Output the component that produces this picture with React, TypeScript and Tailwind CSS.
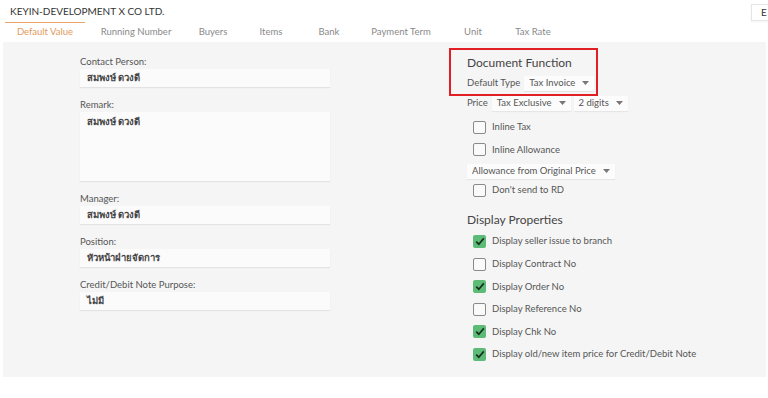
import React from "react";

const tabs: [string, string][] = [
  ["Default Value", "w-[80px]"],
  ["Running Number", "w-[102px]"],
  ["Buyers", "w-[52px]"],
  ["Items", "w-[64px]"],
  ["Bank", "w-[52px]"],
  ["Payment Term", "w-[92px]"],
  ["Unit", "w-[52px]"],
  ["Tax Rate", "w-[68px]"],
];

function Caret() {
  return (
    <svg width="7" height="4" viewBox="0 0 7 4" className="ml-[7px] shrink-0">
      <path d="M0 0h7L3.5 4z" fill="#777" />
    </svg>
  );
}

function Select({ label, className }: { label: string; className: string }) {
  return (
    <div
      className={`flex h-[15px] items-center bg-[#fcfcfc] shadow-[0_1px_1px_rgba(0,0,0,0.06)] px-[5px] text-[9.5px] text-[#555] ${className}`}
    >
      <span>{label}</span>
      <Caret />
    </div>
  );
}

function Check({ checked, label }: { checked?: boolean; label: string }) {
  return (
    <div className="flex h-[22.6px] items-center pl-[6px]">
      {checked ? (
        <span className="flex h-[13px] w-[13px] items-center justify-center rounded-[2px] bg-[#5dbb78]">
          <svg width="10" height="9" viewBox="0 0 10 9">
            <path d="M1.2 4.6L3.8 7.2L8.8 1.4" fill="none" stroke="#17301c" strokeWidth="1.7" />
          </svg>
        </span>
      ) : (
        <span className="h-[13px] w-[13px] rounded-[2px] border border-[#8a8a8a] bg-[#fafafa]" />
      )}
      <span className="ml-[6px] text-[9.5px] text-[#555]">{label}</span>
    </div>
  );
}

function Field({ label, value, tall }: { label: string; value: string; tall?: boolean }) {
  return (
    <div>
      <div className="h-[14px] text-[9.5px] leading-[14px] text-[#555]">{label}</div>
      <div
        className={`bg-[#fbfbfb] px-[7px] text-[9.5px] font-semibold text-[#444] shadow-[0_1px_1px_rgba(0,0,0,0.07)] ${
          tall ? "h-[69px] pt-[3px]" : "flex h-[18px] items-center"
        }`}
      >
        {value}
      </div>
    </div>
  );
}

export default function App() {
  return (
    <div className="w-[768px] h-[398px] overflow-hidden bg-white font-['Lato','Noto_Sans',sans-serif]">
      <div className="flex h-[22px] items-center justify-between">
        <div className="pl-[10px] text-[10px] text-[#333]">KEYIN-DEVELOPMENT X CO LTD.</div>
        <button className="mt-[2px] h-[17px] w-[17px] border border-r-0 border-[#e6e6e6] bg-white pl-[9px] text-left text-[10px] text-[#333] shadow-[0_1px_2px_rgba(0,0,0,0.05)]">
          E
        </button>
      </div>
      <div className="flex h-[20px] pl-[5px]">
        {tabs.map(([t, w], i) => (
          <div
            key={t}
            className={`flex items-center justify-center text-[9.5px] ${w} ${
              i === 0
                ? "border-t border-[#e8a46a] bg-white text-[#e39a5c]"
                : "text-[#8a8a8a]"
            }`}
          >
            {t}
          </div>
        ))}
      </div>
      <div className="ml-[3px] mr-[2px] flex h-[335px] bg-[#f5f5f5]">
        <div className="ml-[77px] flex w-[250px] flex-col gap-[11px] pt-[13px]">
          <Field label="Contact Person:" value="สมพงษ์ ดวงดี" />
          <Field label="Remark:" value="สมพงษ์ ดวงดี" tall />
          <Field label="Manager:" value="สมพงษ์ ดวงดี" />
          <Field label="Position:" value="หัวหน้าฝ่ายจัดการ" />
          <Field label="Credit/Debit Note Purpose:" value="ไม่มี" />
        </div>
        <div className="ml-[119px] pt-[6px]">
          <div className="w-[149px] border-2 border-[#e01e24] pb-[3px] pl-[16px] pt-[5px]">
            <div className="h-[16px] text-[12px] leading-[16px] text-[#444]">Document Function</div>
            <div className="mt-[4px] flex h-[16px] items-center">
              <span className="text-[9.5px] text-[#555]">Default Type</span>
              <Select label="Tax Invoice" className="ml-[4px]" />
            </div>
          </div>
          <div className="pl-[18px]">
            <div className="flex h-[14px] items-center">
              <span className="text-[9.5px] text-[#555]">Price</span>
              <Select label="Tax Exclusive" className="ml-[4px]" />
              <Select label="2 digits" className="ml-[3px]" />
            </div>
            <div className="mt-[6px]">
              <Check label="Inline Tax" />
              <Check label="Inline Allowance" />
              <div className="flex h-[20px] items-center">
                <Select label="Allowance from Original Price" className="" />
              </div>
              <div className="h-[18px] -mt-[2px]">
                <Check label="Don't send to RD" />
              </div>
            </div>
            <div className="mt-[13px] h-[20px] text-[12px] leading-[20px] text-[#444]">Display Properties</div>
            <Check checked label="Display seller issue to branch" />
            <Check label="Display Contract No" />
            <Check checked label="Display Order No" />
            <Check label="Display Reference No" />
            <Check checked label="Display Chk No" />
            <Check checked label="Display old/new item price for Credit/Debit Note" />
          </div>
        </div>
      </div>
    </div>
  );
}
